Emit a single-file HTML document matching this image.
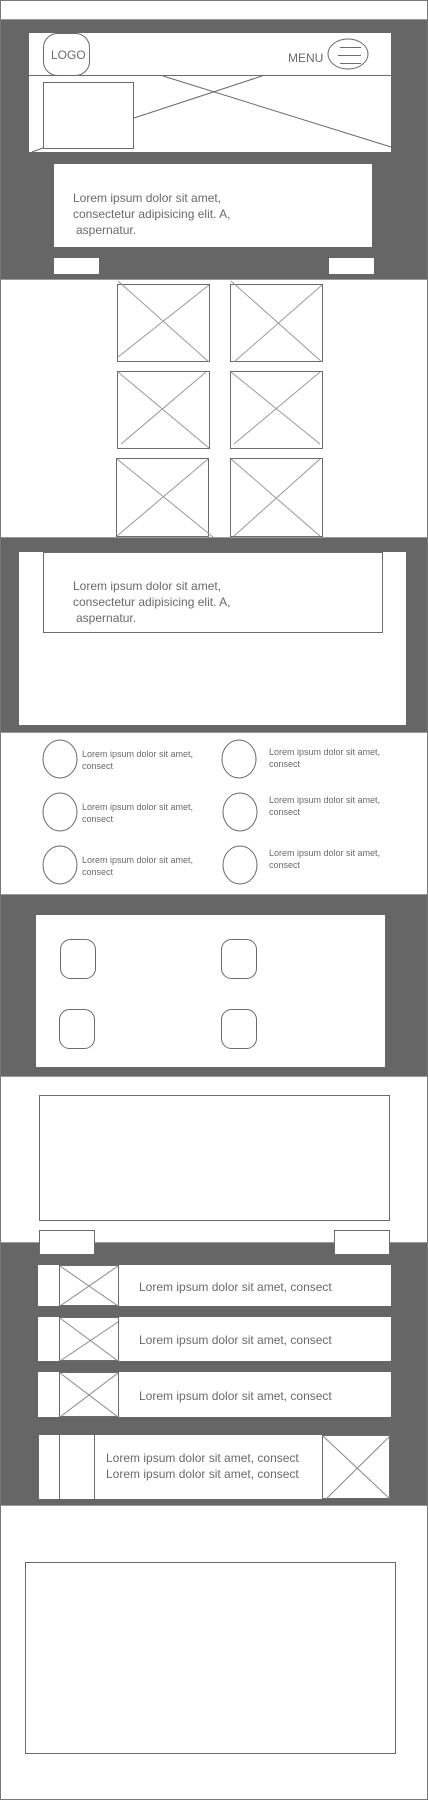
<!DOCTYPE html>
<html><head><meta charset="utf-8"><style>
html,body{margin:0;padding:0;background:#fff;}
svg{display:block;}
text{font-family:"Liberation Sans",sans-serif;fill:#6a6a6a;}
</style></head><body>
<svg width="428" height="1800" viewBox="0 0 428 1800" xmlns="http://www.w3.org/2000/svg">
<rect x="0" y="0" width="428" height="1800" fill="#fff"/>
<!-- dark sections -->
<rect x="0" y="19" width="428" height="260" fill="#666"/>
<rect x="0" y="538" width="428" height="194" fill="#666"/>
<rect x="0" y="894" width="428" height="182" fill="#666"/>
<rect x="0" y="1242" width="428" height="263" fill="#666"/>
<g fill="none" stroke="#999" stroke-width="1">
<line x1="0" y1="19.5" x2="428" y2="19.5"/><line x1="0" y1="279.5" x2="428" y2="279.5"/>
<line x1="0" y1="537.5" x2="428" y2="537.5"/><line x1="0" y1="732.5" x2="428" y2="732.5"/>
<line x1="0" y1="894.5" x2="428" y2="894.5"/><line x1="0" y1="1076.5" x2="428" y2="1076.5"/>
<line x1="0" y1="1242.5" x2="428" y2="1242.5"/><line x1="0" y1="1505.5" x2="428" y2="1505.5"/>
</g>
<rect x="0.5" y="0.5" width="427" height="1799" fill="none" stroke="#777"/>

<!-- header -->
<rect x="29" y="33" width="362" height="119" fill="#fff"/>
<g fill="none" stroke="#6a6a6a" stroke-width="1">
<line x1="29" y1="75.5" x2="391" y2="75.5"/>
<rect x="43.5" y="33.5" width="46" height="42" rx="14"/>
<ellipse cx="348" cy="54" rx="20" ry="15"/>
<line x1="340" y1="47.5" x2="361" y2="47.5"/><line x1="338" y1="55.5" x2="361" y2="55.5"/><line x1="340" y1="63.5" x2="361" y2="63.5"/>
<rect x="43.5" y="82.5" width="90" height="66"/>
<line x1="163" y1="76" x2="391" y2="147"/>
<line x1="262" y1="76" x2="134" y2="118"/>
<line x1="32" y1="152" x2="43" y2="148"/>
</g>
<text x="51" y="59" font-size="12">LOGO</text>
<text x="288" y="62" font-size="12">MENU</text>

<rect x="54" y="164" width="318" height="83" fill="#fff"/>
<text x="73" y="202" font-size="12">Lorem ipsum dolor sit amet,</text>
<text x="73" y="218" font-size="12">consectetur adipisicing elit. A,</text>
<text x="76" y="234" font-size="12">aspernatur.</text>
<rect x="54" y="258" width="45" height="16" fill="#fff"/>
<rect x="329" y="258" width="45" height="16" fill="#fff"/>

<!-- image grid -->
<g fill="none" stroke="#6a6a6a" stroke-width="1">
<rect x="117.5" y="284.5" width="92" height="77"/><line x1="118" y1="281" x2="209" y2="362" stroke="#999"/><line x1="209" y1="285" x2="118" y2="357" stroke="#999"/>
<rect x="230.5" y="284.5" width="92" height="77"/><line x1="231" y1="281" x2="322" y2="362" stroke="#999"/><line x1="322" y1="285" x2="234" y2="362" stroke="#999"/>
<rect x="117.5" y="371.5" width="92" height="77"/><line x1="118" y1="372" x2="209" y2="448" stroke="#999"/><line x1="206" y1="372" x2="121" y2="444" stroke="#999"/>
<rect x="230.5" y="371.5" width="92" height="77"/><line x1="231" y1="372" x2="320" y2="444" stroke="#999"/><line x1="320" y1="372" x2="234" y2="444" stroke="#999"/>
<rect x="116.5" y="458.5" width="92" height="78"/><line x1="117" y1="459" x2="213" y2="537" stroke="#999"/><line x1="208" y1="459" x2="117" y2="536" stroke="#999"/>
<rect x="230.5" y="458.5" width="92" height="78"/><line x1="231" y1="459" x2="320" y2="536" stroke="#999"/><line x1="320" y1="459" x2="234" y2="536" stroke="#999"/>
</g>

<!-- text panel -->
<rect x="19" y="552" width="387" height="173" fill="#fff"/>
<rect x="43.5" y="552.5" width="339" height="80" fill="none" stroke="#6a6a6a"/>
<text x="73" y="590" font-size="12">Lorem ipsum dolor sit amet,</text>
<text x="73" y="606" font-size="12">consectetur adipisicing elit. A,</text>
<text x="76" y="622" font-size="12">aspernatur.</text>

<!-- circles -->
<g fill="none" stroke="#6a6a6a">
<ellipse cx="60" cy="759" rx="17" ry="19"/><ellipse cx="239" cy="759" rx="17" ry="19"/>
<ellipse cx="60" cy="812" rx="17" ry="19"/><ellipse cx="240" cy="812" rx="17" ry="19"/>
<ellipse cx="60" cy="865" rx="17" ry="19"/><ellipse cx="240" cy="865" rx="17" ry="19"/>
</g>
<g font-size="9">
<text x="82" y="757">Lorem ipsum dolor sit amet,</text><text x="82" y="769">consect</text>
<text x="269" y="755">Lorem ipsum dolor sit amet,</text><text x="269" y="767">consect</text>
<text x="82" y="810">Lorem ipsum dolor sit amet,</text><text x="82" y="822">consect</text>
<text x="269" y="803">Lorem ipsum dolor sit amet,</text><text x="269" y="815">consect</text>
<text x="82" y="863">Lorem ipsum dolor sit amet,</text><text x="82" y="875">consect</text>
<text x="269" y="856">Lorem ipsum dolor sit amet,</text><text x="269" y="868">consect</text>
</g>

<!-- rounded squares -->
<rect x="36" y="915" width="349" height="152" fill="#fff"/>
<g fill="none" stroke="#6a6a6a">
<rect x="60.5" y="939.5" width="35" height="39" rx="10"/>
<rect x="221.5" y="939.5" width="35" height="39" rx="10"/>
<rect x="59.5" y="1009.5" width="35" height="39" rx="10"/>
<rect x="221.5" y="1009.5" width="35" height="39" rx="10"/>
</g>

<!-- big box + buttons -->
<rect x="39.5" y="1095.5" width="350" height="125" fill="none" stroke="#6a6a6a"/>
<rect x="39.5" y="1230.5" width="55" height="24" fill="#fff" stroke="#6a6a6a"/>
<rect x="334.5" y="1230.5" width="55" height="24" fill="#fff" stroke="#6a6a6a"/>

<!-- list rows -->
<rect x="38" y="1265" width="353" height="41" fill="#fff"/>
<rect x="38" y="1317" width="353" height="44" fill="#fff"/>
<rect x="38" y="1372" width="353" height="45" fill="#fff"/>
<g fill="none" stroke="#6a6a6a">
<rect x="59.5" y="1265.5" width="59" height="40"/><line x1="60" y1="1266" x2="118" y2="1306" stroke="#888"/><line x1="118" y1="1266" x2="60" y2="1306" stroke="#888"/>
<rect x="59.5" y="1317.5" width="59" height="43"/><line x1="60" y1="1318" x2="118" y2="1361" stroke="#888"/><line x1="118" y1="1322" x2="60" y2="1361" stroke="#888"/>
<rect x="59.5" y="1372.5" width="59" height="44"/><line x1="60" y1="1373" x2="118" y2="1417" stroke="#888"/><line x1="118" y1="1373" x2="60" y2="1417" stroke="#888"/>
</g>
<g font-size="12">
<text x="139" y="1291">Lorem ipsum dolor sit amet,  consect</text>
<text x="139" y="1344">Lorem ipsum dolor sit amet,  consect</text>
<text x="139" y="1400">Lorem ipsum dolor sit amet,  consect</text>
</g>
<rect x="39" y="1435" width="351" height="64" fill="#fff"/>
<g fill="none" stroke="#6a6a6a">
<line x1="59.5" y1="1435" x2="59.5" y2="1499"/><line x1="94.5" y1="1435" x2="94.5" y2="1499"/>
<rect x="322.5" y="1435.5" width="67" height="63"/><line x1="323" y1="1436" x2="390" y2="1499" stroke="#888"/><line x1="390" y1="1436" x2="326" y2="1499" stroke="#888"/>
</g>
<text x="106" y="1462" font-size="12">Lorem ipsum dolor sit amet,  consect</text>
<text x="106" y="1478" font-size="12">Lorem ipsum dolor sit amet,  consect</text>

<!-- bottom box -->
<rect x="25.5" y="1562.5" width="370" height="191" fill="none" stroke="#6a6a6a"/>
</svg>
</body></html>
